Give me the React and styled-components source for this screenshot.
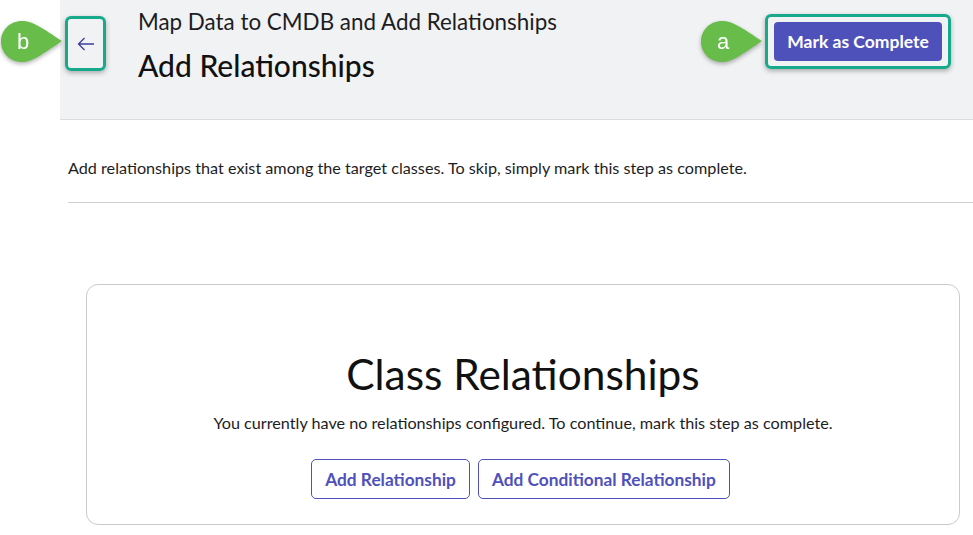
import React from 'react'
import styled, { createGlobalStyle } from 'styled-components'

const GlobalStyle = createGlobalStyle`
  html, body {
    margin: 0;
    padding: 0;
    background: #fff;
    font-family: Lato, "Open Sans", sans-serif;
    color: #1d1d1f;
  }
`

const Page = styled.div`
  position: relative;
  width: 973px;
  height: 535px;
  overflow: hidden;
  padding-left: 60px;
  box-sizing: border-box;
`

const Header = styled.header`
  height: 120px;
  background: #f1f2f4;
  border-bottom: 1px solid #dcdde0;
  display: flex;
  align-items: flex-start;
  padding: 16px 22px 0 5px;
  box-sizing: border-box;
`

const Highlight = styled.div`
  border: 3px solid #16a98b;
  border-radius: 6px;
  box-shadow: 0 2px 5px rgba(0, 0, 0, 0.3);
  box-sizing: border-box;
  display: flex;
  align-items: center;
  justify-content: center;
`

const BackBox = styled(Highlight)`
  width: 41px;
  height: 55px;
  color: #3b3f9e;
`

const Titles = styled.div`
  flex: 1;
  margin-left: 32px;
  margin-top: -9px;
`

const Overline = styled.div`
  font-size: 22.4px;
  line-height: 30px;
  color: #1d1d1f;
`

const Title = styled.h1`
  margin: 10px 0 0;
  font-size: 30px;
  font-weight: 500;
  line-height: 36px;
  color: #111;
`

const ActionBox = styled(Highlight)`
  width: 186px;
  height: 55px;
  margin-top: -2px;
  padding-bottom: 1px;
`

const PrimaryButton = styled.button`
  width: 168px;
  height: 39px;
  border: none;
  border-radius: 4px;
  background: #4f51bb;
  color: #fff;
  font-family: Lato, sans-serif;
  font-weight: 700;
  font-size: 17.5px;
  padding: 0;
`

const Description = styled.p`
  margin: 0 0 0 8px;
  padding: 39px 0 25px;
  font-size: 16.2px;
  line-height: 18px;
  border-bottom: 1px solid #cfd0d3;
  color: #1d1d1f;
`

const Card = styled.section`
  margin: 81px 13px 0 26px;
  height: 241px;
  border: 1px solid #c9cacd;
  border-radius: 12px;
  box-sizing: border-box;
  display: flex;
  flex-direction: column;
  align-items: center;
  padding-top: 64px;
`

const CardTitle = styled.h2`
  margin: 0;
  font-size: 42.4px;
  font-weight: 400;
  line-height: 50px;
  color: #111;
`

const CardText = styled.p`
  margin: 14px 0 0;
  font-size: 16.2px;
  line-height: 20px;
`

const ButtonRow = styled.div`
  display: flex;
  gap: 8px;
  margin: 26px 5px 0 0;
`

const OutlineButton = styled.button`
  height: 40px;
  padding: 0 13px;
  background: #fff;
  border: 1px solid #4f51bb;
  border-radius: 5px;
  color: #4f51bb;
  font-family: Lato, sans-serif;
  font-weight: 700;
  font-size: 17.3px;
`

const Callout = styled.div`
  position: absolute;
  left: ${p => p.x}px;
  top: ${p => p.y}px;
  width: 66px;
  height: 44px;
  filter: drop-shadow(0 2px 2px rgba(0, 0, 0, 0.3));
  svg { display: block; }
  span {
    position: absolute;
    left: 0;
    top: 0;
    width: 46px;
    line-height: 44px;
    text-align: center;
    color: #fff;
    font-family: "Liberation Sans", Arial, sans-serif;
    font-size: 22px;
  }
`

const Marker = ({ x, y, label }) => (
  <Callout x={x} y={y}>
    <svg width="66" height="44" viewBox="0 0 66 44">
      <path d="M22 1 C33 1 42 8 62 21 C42 34 33 42 22 42 C10 42 1 33 1 21.5 C1 10 10 1 22 1 Z" fill="#68bd4a" />
    </svg>
    <span>{label}</span>
  </Callout>
)

const ArrowLeft = () => (
  <svg width="18" height="14" viewBox="0 0 18 14" fill="none" stroke="currentColor" strokeWidth="1.3">
    <path d="M17 7H1.5M7.5 1L1.5 7l6 6" />
  </svg>
)

export default function App() {
  return (
    <>
      <GlobalStyle />
      <Page>
        <Header>
          <BackBox>
            <ArrowLeft />
          </BackBox>
          <Titles>
            <Overline>Map Data to CMDB and Add Relationships</Overline>
            <Title>Add Relationships</Title>
          </Titles>
          <ActionBox>
            <PrimaryButton>Mark as Complete</PrimaryButton>
          </ActionBox>
        </Header>
        <Description>
          Add relationships that exist among the target classes. To skip, simply mark this step as complete.
        </Description>
        <Card>
          <CardTitle>Class Relationships</CardTitle>
          <CardText>
            You currently have no relationships configured. To continue, mark this step as complete.
          </CardText>
          <ButtonRow>
            <OutlineButton>Add Relationship</OutlineButton>
            <OutlineButton>Add Conditional Relationship</OutlineButton>
          </ButtonRow>
        </Card>
        <Marker x={0} y={20} label="b" />
        <Marker x={700} y={20} label="a" />
      </Page>
    </>
  )
}
